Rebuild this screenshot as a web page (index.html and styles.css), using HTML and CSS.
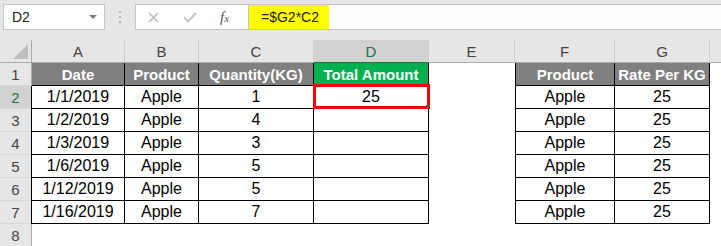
FILE: index.html
```html
<!DOCTYPE html>
<html lang="en">
<head>
    <meta charset="UTF-8">
    <meta name="viewport" content="width=device-width, initial-scale=1.0">
    <title>Total Amount</title>
    <link rel="stylesheet" href="styles.css">
</head>
<body>
    <div class="topbar">
        <div class="namebox">
            <span>D2</span>
            <span class="caret"></span>
        </div>
        <div class="grip"><i></i><i></i><i></i></div>
        <div class="fbtns">
            <svg class="ico-x" width="11" height="11" viewBox="0 0 11 11">
                <path d="M1 1 L10 10 M10 1 L1 10" stroke="#bdbdbd" stroke-width="1.6" fill="none"/>
            </svg>
            <svg class="ico-ok" width="14" height="11" viewBox="0 0 14 11">
                <path d="M1 5.5 L5 9.5 L13 1" stroke="#c4c4c4" stroke-width="2" fill="none"/>
            </svg>
            <span class="fx">f<em>x</em></span>
        </div>
        <div class="finput">
            <span class="formula">=$G2*C2</span>
        </div>
    </div>

    <div class="sheet">
        <!-- column headers -->
        <div class="corner"><span class="tri"></span></div>
        <div class="ch">A</div>
        <div class="ch">B</div>
        <div class="ch">C</div>
        <div class="ch active">D</div>
        <div class="ch">E</div>
        <div class="ch">F</div>
        <div class="ch">G</div>
        <div class="ch last"></div>

        <!-- row 1 -->
        <div class="rh">1</div>
        <div class="c head">Date</div>
        <div class="c head">Product</div>
        <div class="c head">Quantity(KG)</div>
        <div class="c head green">Total Amount</div>
        <div class="c"></div>
        <div class="c head first">Product</div>
        <div class="c head">Rate Per KG</div>
        <div class="c"></div>

        <!-- row 2 -->
        <div class="rh active">2</div>
        <div class="c b first-a">1/1/2019</div>
        <div class="c b">Apple</div>
        <div class="c b">1</div>
        <div class="c b sel">25<span class="handle"></span></div>
        <div class="c"></div>
        <div class="c b first">Apple</div>
        <div class="c b">25</div>
        <div class="c"></div>

        <!-- row 3 -->
        <div class="rh">3</div>
        <div class="c b first-a">1/2/2019</div>
        <div class="c b">Apple</div>
        <div class="c b">4</div>
        <div class="c b"></div>
        <div class="c"></div>
        <div class="c b first">Apple</div>
        <div class="c b">25</div>
        <div class="c"></div>

        <!-- row 4 -->
        <div class="rh">4</div>
        <div class="c b first-a">1/3/2019</div>
        <div class="c b">Apple</div>
        <div class="c b">3</div>
        <div class="c b"></div>
        <div class="c"></div>
        <div class="c b first">Apple</div>
        <div class="c b">25</div>
        <div class="c"></div>

        <!-- row 5 -->
        <div class="rh">5</div>
        <div class="c b first-a">1/6/2019</div>
        <div class="c b">Apple</div>
        <div class="c b">5</div>
        <div class="c b"></div>
        <div class="c"></div>
        <div class="c b first">Apple</div>
        <div class="c b">25</div>
        <div class="c"></div>

        <!-- row 6 -->
        <div class="rh">6</div>
        <div class="c b first-a">1/12/2019</div>
        <div class="c b">Apple</div>
        <div class="c b">5</div>
        <div class="c b"></div>
        <div class="c"></div>
        <div class="c b first">Apple</div>
        <div class="c b">25</div>
        <div class="c"></div>

        <!-- row 7 -->
        <div class="rh">7</div>
        <div class="c b first-a">1/16/2019</div>
        <div class="c b">Apple</div>
        <div class="c b">7</div>
        <div class="c b"></div>
        <div class="c"></div>
        <div class="c b first">Apple</div>
        <div class="c b">25</div>
        <div class="c"></div>

        <!-- row 8 -->
        <div class="rh">8</div>
        <div class="c"></div>
        <div class="c"></div>
        <div class="c"></div>
        <div class="c"></div>
        <div class="c"></div>
        <div class="c"></div>
        <div class="c"></div>
        <div class="c"></div>
    </div>
</body>
</html>
```

FILE: styles.css
```css
* {
    box-sizing: border-box;
}

body {
    margin: 0;
    background-color: #fff;
    font-family: 'Liberation Sans', Arial, sans-serif;
    color: #000;
    overflow: hidden;
}

/* formula bar */
.topbar {
    height: 40px;
    background-color: #e6e6e6;
    display: flex;
    align-items: flex-start;
    padding: 4px 0 0 3px;
}

.namebox {
    width: 102px;
    height: 26px;
    background-color: #fff;
    border: 1px solid #c6c6c6;
    display: flex;
    align-items: center;
    justify-content: space-between;
    padding: 0 7px 0 8px;
    font-size: 14px;
    color: #222;
}

.caret {
    width: 0;
    height: 0;
    border-left: 4px solid transparent;
    border-right: 4px solid transparent;
    border-top: 4px solid #7a7a7a;
}

.grip {
    width: 30px;
    height: 26px;
    display: flex;
    flex-direction: column;
    align-items: center;
    justify-content: center;
    gap: 3px;
}

.grip i {
    width: 2px;
    height: 2px;
    background-color: #b4b4b4;
}

.fbtns {
    width: 113px;
    height: 26px;
    background-color: #fff;
    border: 1px solid #c6c6c6;
    border-right: none;
    display: flex;
    align-items: center;
    padding-left: 12px;
}

.ico-ok {
    margin-left: 24px;
}

.fx {
    margin-left: 23px;
    font-family: 'Liberation Serif', serif;
    font-style: italic;
    font-size: 15px;
    color: #555;
}

.fx em {
    font-size: 11px;
}

.finput {
    flex: 1;
    height: 26px;
    background-color: #fdfdfd;
    border: 1px solid #c6c6c6;
    border-right: none;
}

.formula {
    display: flex;
    align-items: center;
    width: 80px;
    height: 24px;
    padding-left: 12px;
    background-color: #ffff00;
    font-size: 14px;
    color: #222;
}

/* sheet grid */
.sheet {
    display: grid;
    grid-template-columns: 32px 93px 74px 115px 115px 86px 100px 95px 1fr;
    grid-auto-rows: 23px;
    font-size: 16px;
}

.corner,
.ch,
.rh {
    background-color: #e6e6e6;
    color: #444;
    font-size: 15px;
    display: flex;
    align-items: center;
    justify-content: center;
}

.corner {
    position: relative;
    border-right: 1px solid #ababab;
    border-bottom: 1px solid #ababab;
}

.tri {
    position: absolute;
    right: 3px;
    bottom: 3px;
    width: 0;
    height: 0;
    border-left: 15px solid transparent;
    border-bottom: 15px solid #bfbfbf;
}

.ch {
    border-right: 1px solid #d0d0d0;
    border-bottom: 1px solid #ababab;
}

.ch.last {
    border-right: none;
}

.ch.active {
    background-color: #d2d2d2;
    color: #217346;
    border-bottom: 1px solid #217346;
}

.rh {
    border-right: 1px solid #ababab;
    border-bottom: 1px solid #d6d6d6;
}

.rh.active {
    background-color: #d2d2d2;
    color: #217346;
    border-right: 1px solid #217346;
}

.c {
    display: flex;
    align-items: center;
    justify-content: center;
    white-space: nowrap;
}

.c.b {
    border-right: 1px solid #000;
    border-bottom: 1px solid #000;
}

.c.first-a {
    box-shadow: -1px 0 0 #000;
}

.c.first {
    border-left: 1px solid #000;
}

.c.head {
    background-color: #808080;
    color: #fff;
    font-weight: bold;
    font-size: 15px;
    border-right: 1px solid #000;
    border-bottom: 1px solid #000;
}

.c.head.green {
    background-color: #00b050;
}

.c.sel {
    position: relative;
}

/* active cell frame drawn over the cell */
.c.sel::after {
    content: '';
    position: absolute;
    top: -2px;
    left: -1px;
    right: -2px;
    bottom: -1px;
    border: 3px solid #ff0000;
}

.handle {
    position: absolute;
    right: -1px;
    bottom: 0;
    width: 3px;
    height: 3px;
    background-color: #217346;
    z-index: 1;
}
```
